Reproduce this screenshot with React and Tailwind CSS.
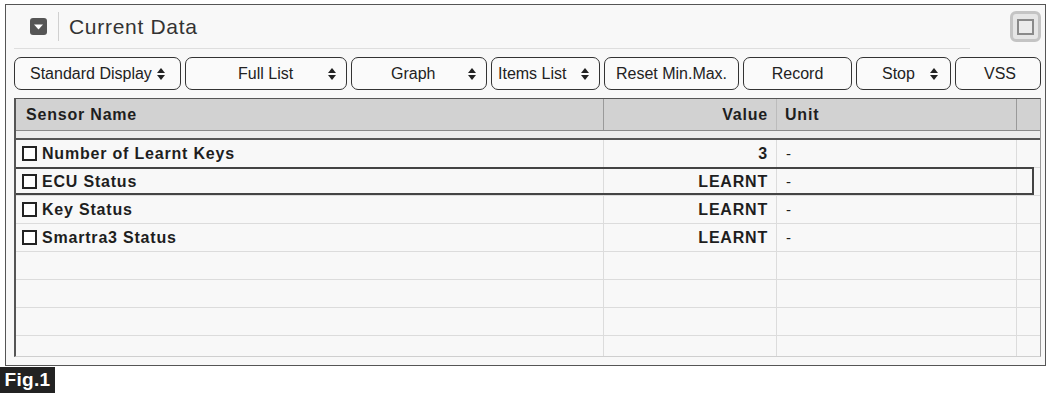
import React from "react";

const buttons = [
  { label: "Standard Display", w: "w-[167px]", cls: "pl-[15px] pr-[15px] justify-between", arrow: true },
  { label: "Full List", w: "w-[162px]", cls: "pl-[52px] pr-[10px] justify-between", arrow: true },
  { label: "Graph", w: "w-[136px]", cls: "pl-[39px] pr-[10px] justify-between", arrow: true },
  { label: "Items List", w: "w-[109px]", cls: "pl-[6px] pr-[10px] justify-between", arrow: true },
  { label: "Reset Min.Max.", w: "w-[135px]", cls: "justify-center", arrow: false },
  { label: "Record", w: "w-[109px]", cls: "justify-center", arrow: false },
  { label: "Stop", w: "w-[95px]", cls: "pl-[25px] pr-[12px] justify-between", arrow: true },
  { label: "VSS", w: "w-[86px]", cls: "justify-center pl-[4px]", arrow: false },
];

const rows = [
  { name: "Number of Learnt Keys", value: "3", unit: "-" },
  { name: "ECU Status", value: "LEARNT", unit: "-", selected: true },
  { name: "Key Status", value: "LEARNT", unit: "-" },
  { name: "Smartra3 Status", value: "LEARNT", unit: "-" },
  {},
  {},
  {},
  {},
];

function UpDown() {
  return (
    <svg width="8" height="12" viewBox="0 0 8 12" className="shrink-0">
      <path d="M0 5 L4 0 L8 5 Z" fill="#222" />
      <path d="M0 7 L8 7 L4 12 Z" fill="#222" />
    </svg>
  );
}

function Checkbox() {
  return <span className="w-[15px] h-[15px] border-2 border-[#222] bg-white shrink-0" />;
}

export default function App() {
  return (
    <div className="w-[1050px] h-[396px] bg-white pt-[4px] font-['Liberation_Sans',Arial,sans-serif] text-[#222]">
      <div className="ml-[5px] w-[1041px] h-[362px] border border-[#555] bg-[#f8f8f8] flex flex-col">
        {/* title */}
        <div className="h-[43px] flex items-center pl-[24px] pr-[4px]">
          <div className="w-[17px] h-[17px] rounded-[3px] bg-[#555] flex items-center justify-center">
            <svg width="9" height="6" viewBox="0 0 9 6">
              <path d="M0 0.5 L9 0.5 L4.5 5.5 Z" fill="#fff" />
            </svg>
          </div>
          <div className="ml-[11px] w-px h-[29px] bg-[#d0d0d0]" />
          <span className="ml-[10px] text-[21px] tracking-[0.7px] text-[#333]">Current Data</span>
          <div className="ml-auto w-[31px] h-[31px] rounded-[6px] border-[3px] border-[#c4c4c4] bg-[#e6e6e6] flex items-center justify-center">
            <div className="w-[17px] h-[16px] border-2 border-[#8a8a8a] bg-[#ececec]" />
          </div>
        </div>
        <div className="ml-[8px] w-[956px] h-px bg-[#dedede]" />

        {/* buttons */}
        <div className="mt-[8px] ml-[8px] flex gap-[4px]">
          {buttons.map((b) => (
            <div
              key={b.label}
              className={`${b.w} ${b.cls} h-[33px] rounded-[7px] border border-[#333] bg-[#fafafa] flex items-center text-[16px] text-[#222]`}
            >
              <span className="whitespace-nowrap">{b.label}</span>
              {b.arrow && <UpDown />}
            </div>
          ))}
        </div>

        {/* table */}
        <div className="mt-[8px] ml-[8px] w-[1027px] h-[259px] border-t border-l-2 border-r border-b border-t-[#555] border-l-[#555] border-r-[#999] border-b-[#cfcfcf] flex flex-col font-bold text-[16px] tracking-[0.8px] text-[#1e1e1e]">
          <div className="h-[31px] bg-[#d2d2d2] flex shrink-0">
            <div className="w-[588px] border-r border-[#9a9a9a] flex items-center pl-[10px]">Sensor Name</div>
            <div className="w-[173px] border-r border-[#bcbcbc] flex items-center justify-end pr-[8px]">Value</div>
            <div className="w-[240px] border-r border-[#9a9a9a] flex items-center pl-[8px]">Unit</div>
            <div className="flex-1" />
          </div>
          <div className="h-px bg-[#888] shrink-0" />
          <div className="h-[7px] bg-[#ebebeb] shrink-0" />
          <div className="h-[2px] bg-[#555] shrink-0" />
          <div className="flex-1 overflow-hidden">
            {rows.map((r, i) => (
              <div key={i} className="relative h-[28px] border-b border-[#dcdcdc] flex">
                <div className="w-[588px] border-r border-[#dcdcdc] flex items-center pl-[6px] gap-[5px]">
                  {r.name && <Checkbox />}
                  {r.name && <span>{r.name}</span>}
                </div>
                <div className="w-[173px] border-r border-[#dcdcdc] flex items-center justify-end pr-[8px]">
                  {r.value}
                </div>
                <div className="w-[240px] border-r border-[#dcdcdc] flex items-start pt-[3px] pl-[9px] font-normal text-[15px]">
                  {r.unit}
                </div>
                <div className="flex-1" />
                {r.selected && (
                  <div className="absolute -left-[6px] right-[6px] -top-px bottom-0 border-2 border-[#444] pointer-events-none" />
                )}
              </div>
            ))}
          </div>
        </div>
      </div>
      <div className="mt-px w-[55px] h-[26px] bg-[#222] text-white font-bold text-[19px] tracking-[0.3px] flex items-center justify-center">
        Fig.1
      </div>
    </div>
  );
}
